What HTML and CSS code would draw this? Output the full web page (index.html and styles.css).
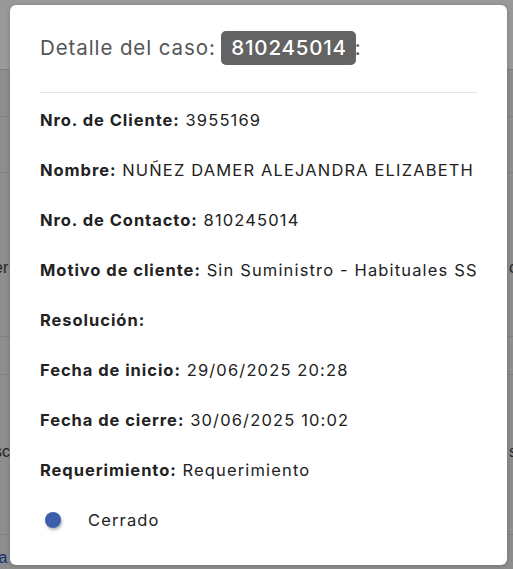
FILE: index.html
```html
<!DOCTYPE html>
<html lang="es">
<head>
<meta charset="utf-8">
<link rel="stylesheet" href="styles.css">
</head>
<body>
<div class="page">
  <div class="bg-head"></div>
  <div class="bg-row r1"></div>
  <div class="bg-row r2"></div>
  <div class="bg-row r3"><span class="bg-l">er</span><span class="bg-r">c</span></div>
  <div class="bg-row r4"></div>
  <div class="bg-row r5"><span class="bg-l">sc</span><span class="bg-r">s</span></div>
  <div class="bg-row r6"><span class="bg-l link">fa</span></div>
</div>

<div class="dialog">
  <h2 class="title">Detalle del caso: <span class="badge">810245014</span>:</h2>
  <hr class="divider">
  <div class="rows">
    <p class="row"><b>Nro. de Cliente:</b> 3955169</p>
    <p class="row"><b>Nombre:</b> NUÑEZ DAMER ALEJANDRA ELIZABETH</p>
    <p class="row"><b>Nro. de Contacto:</b> 810245014</p>
    <p class="row"><b>Motivo de cliente:</b> Sin Suministro - Habituales SS</p>
    <p class="row"><b>Resolución:</b></p>
    <p class="row"><b>Fecha de inicio:</b> 29/06/2025 20:28</p>
    <p class="row"><b>Fecha de cierre:</b> 30/06/2025 10:02</p>
    <p class="row"><b>Requerimiento:</b> Requerimiento</p>
    <div class="status"><span class="dot"></span><span class="status-text">Cerrado</span></div>
  </div>
</div>
</body>
</html>
```

FILE: styles.css
```css
* { box-sizing: border-box; }
html, body {
  margin: 0;
  padding: 0;
}
body {
  width: 513px;
  height: 569px;
  overflow: hidden;
  background: #8b8b8b;
  font-family: Inter, "Noto Sans", sans-serif;
  position: relative;
}
.page {
  display: flex;
  flex-direction: column;
}
.bg-head {
  height: 70px;
  background: #999999;
  border-bottom: 1px solid #7f7f7f;
}
.bg-row {
  display: flex;
  justify-content: space-between;
  align-items: center;
  border-bottom: 1px solid #7f7f7f;
  background: #8d8d8d;
  font-family: "Liberation Sans", sans-serif;
  font-size: 16px;
  color: #262626;
}
.r1 { height: 47px; }
.r2 { height: 56px; }
.r3 { height: 164px; align-items: flex-start; padding-top: 86px; }
.r4 { height: 38px; }
.r5 { height: 160px; align-items: flex-start; padding-top: 68px; }
.r6 { height: 40px; border-bottom: none; align-items: flex-start; padding-top: 14px; }
.bg-l { margin-left: -6px; }
.bg-r { margin-right: -4px; }
.link { color: #14306e; }

.dialog {
  position: absolute;
  left: 10px;
  top: 5px;
  width: 497px;
  height: 560px;
  background: #ffffff;
  border-radius: 6px;
  padding: 0 30px;
  box-shadow: 0 1px 4px rgba(0,0,0,0.2);
}
.title {
  margin: 0;
  padding-top: 23px;
  font-size: 20.5px;
  font-weight: 400;
  letter-spacing: 0.9px;
  color: #555555;
  line-height: 40px;
  height: 87px;
  white-space: nowrap;
}
.badge {
  display: inline-block;
  background: #636363;
  color: #ffffff;
  font-weight: 500;
  letter-spacing: 0.8px;
  border-radius: 5px;
  padding: 0 9px 0 10px;
  line-height: 34px;
  height: 34px;
  margin-left: -1px;
  margin-right: -1px;
}
.divider {
  margin: 0;
  border: none;
  border-top: 1px solid #e3e3e3;
}
.rows {
  display: flex;
  flex-direction: column;
  padding-top: 16px;
}
.row {
  margin: 0;
  height: 50px;
  line-height: 22px;
  font-size: 16.5px;
  letter-spacing: 1.15px;
  color: #222222;
  white-space: nowrap;
}
.row b { font-weight: 700; letter-spacing: 0.95px; }
.status {
  display: flex;
  align-items: center;
  height: 24px;
  margin-top: -1px;
}
.dot {
  width: 16px;
  height: 16px;
  border-radius: 50%;
  background: #3c5fab;
  box-shadow: 1px 2px 3px rgba(0,0,0,0.3);
  margin-left: 5px;
}
.status-text {
  margin-left: 27px;
  font-size: 16.5px;
  letter-spacing: 1.15px;
  color: #222222;
}
```
